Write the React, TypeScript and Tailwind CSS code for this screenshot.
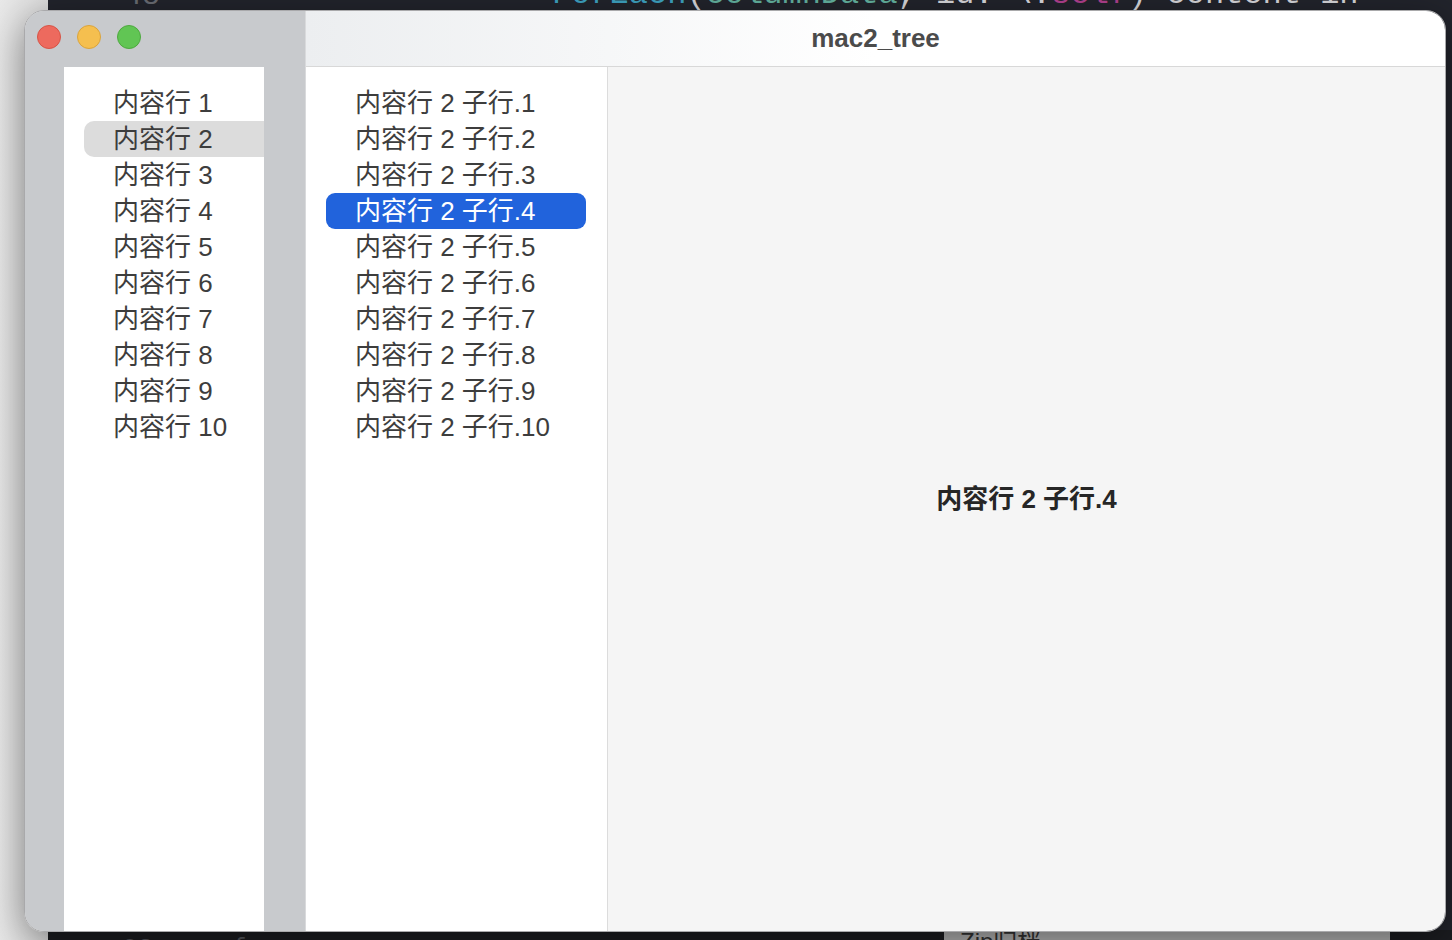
import React, { useState } from 'react';

const cjk = { fontFamily: '"Helvetica Neue", "Liberation Sans", "Noto Sans CJK SC", sans-serif' };

const rows = Array.from({ length: 10 }, (_, i) => i + 1);

const TrafficLights: React.FC = () => (
  <div className="flex items-center gap-[16px] pl-[12px] pt-[14px]">
    <span className="w-[24px] h-[24px] rounded-full bg-[#ed6a5e] border border-[#d65446]" />
    <span className="w-[24px] h-[24px] rounded-full bg-[#f5bf4f] border border-[#d9a33d]" />
    <span className="w-[24px] h-[24px] rounded-full bg-[#61c554] border border-[#4ea83f]" />
  </div>
);

// "内容行 2 子行.4" with the small gap macOS puts between latin and CJK
const ChildLabel: React.FC<{ parent: number; child: number }> = ({ parent, child }) => (
  <>
    内容行 {parent}
    <span className="inline-block w-[7px]" />
    子行.{child}
  </>
);

export default function App() {
  const [parent, setParent] = useState(2);
  const [child, setChild] = useState(4);

  return (
    <div className="relative w-[1452px] h-[940px] overflow-hidden bg-[#22242c]" style={cjk}>
      {/* desktop behind the window */}
      <div className="absolute left-0 top-0 w-[48px] h-full bg-gradient-to-r from-[#e9e9e9] to-[#dedede]" />
      <div className="absolute left-[124px] top-[-26px] text-[30px] text-[#6b6d74] font-mono">48</div>
      <div className="absolute left-[552px] top-[-29px] whitespace-nowrap text-[32px] font-mono text-[#d8d8dc]">
        <span className="text-[#3ea3c2]">ForEach</span>(<span className="text-[#64b3a0]">columnData</span>, id: \.
        <span className="text-[#b2418f]">self</span>) content in
      </div>
      <div className="absolute left-[48px] bottom-0 w-[1404px] h-[10px] bg-[#1c1d21]" />
      <div className="absolute left-[122px] top-[930px] text-[26px] text-[#55575d] font-mono">03 ····{'{'}-</div>
      <div className="absolute left-[944px] top-[928px] w-[446px] h-[20px] bg-[#b4b4b4] pl-[16px] text-[24px] leading-[28px] text-[#333]">
        Zip归档
      </div>

      {/* window */}
      <div className="absolute left-[24px] top-[10px] w-[1422px] h-[922px] flex rounded-[20px] overflow-hidden border border-[#a9a9ab] shadow-[0_10px_40px_rgba(0,0,0,0.45)]">
        <aside className="w-[281px] flex flex-col bg-[#c8cacd] border-r border-[#d9dadc] shrink-0">
          <div className="h-[56px]">
            <TrafficLights />
          </div>
          <div className="flex-1 pl-[39px] pr-[41px]">
            <div className="w-[200px] h-full bg-white overflow-hidden pt-[18px]">
              {rows.map((n) => (
                <div
                  key={n}
                  onClick={() => setParent(n)}
                  className={`ml-[20px] w-[200px] h-[36px] pl-[29px] text-[26px] leading-[36px] whitespace-nowrap text-[#3d3d3d] rounded-[10px] ${
                    parent === n ? 'bg-[#dcdcdc]' : ''
                  }`}
                >
                  内容行 {n}
                </div>
              ))}
            </div>
          </div>
        </aside>

        <main className="flex-1 flex flex-col">
          <div className="h-[56px] shrink-0 flex items-center justify-center border-b border-[#d8d8d8] bg-gradient-to-r from-[#eceef0] via-white to-white">
            <span className="text-[26px] font-bold text-[#4b4b4b]">mac2_tree</span>
          </div>
          <div className="flex-1 flex">
            <div className="w-[302px] bg-white border-r border-[#dcdcdc] pt-[18px] shrink-0">
              {rows.map((n) => (
                <div
                  key={n}
                  onClick={() => setChild(n)}
                  className={`ml-[20px] w-[260px] h-[36px] pl-[29px] text-[26px] leading-[36px] whitespace-nowrap rounded-[9px] ${
                    child === n ? 'bg-[#2163dc] text-white' : 'text-[#3d3d3d]'
                  }`}
                >
                  <ChildLabel parent={parent} child={n} />
                </div>
              ))}
            </div>
            <div className="flex-1 bg-[#f5f5f5] flex items-center justify-center">
              <span className="text-[26px] font-bold text-[#262626] whitespace-nowrap">
                <ChildLabel parent={parent} child={child} />
              </span>
            </div>
          </div>
        </main>
      </div>
    </div>
  );
}
